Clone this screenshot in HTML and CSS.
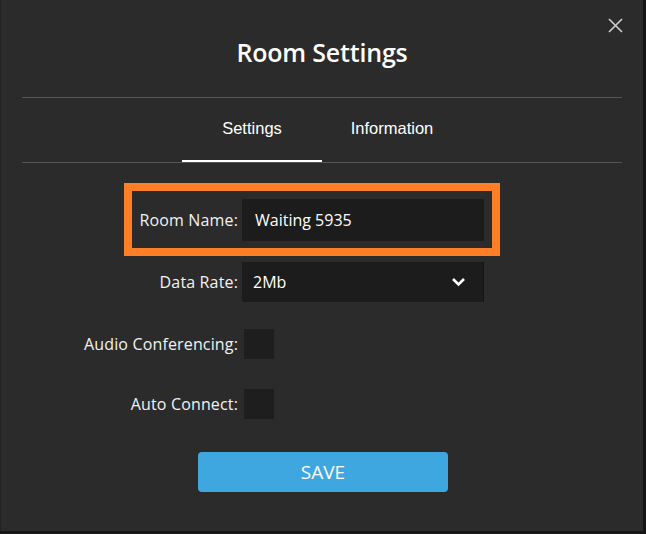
FILE: index.html
```html
<!DOCTYPE html>
<html lang="en">
<head>
    <meta charset="UTF-8">
    <meta name="viewport" content="width=device-width, initial-scale=1.0">
    <title>Room Settings</title>
    <link rel="stylesheet" href="styles.css">
</head>
<body>
    <div class="modal">
        <a href="#" class="modal-close">
            <svg width="15" height="15" viewBox="0 0 15 15"><path d="M1 1L14 14M14 1L1 14" stroke="#cfcfcf" stroke-width="1.6" fill="none"/></svg>
        </a>
        <div class="modal-header">
            <h1>Room Settings</h1>
        </div>
        <ul class="tabs">
            <li class="active">Settings</li>
            <li>Information</li>
        </ul>
        <div class="form">
            <div class="form-row highlight">
                <label>Room Name:</label>
                <input type="text" class="text-input" value="Waiting 5935">
            </div>
            <div class="form-row row-select">
                <label>Data Rate:</label>
                <div class="select">
                    <span>2Mb</span>
                    <svg width="15" height="10" viewBox="0 0 15 10"><path d="M2 2L7.5 7.5L13 2" stroke="#fff" stroke-width="2.6" fill="none"/></svg>
                </div>
            </div>
            <div class="form-row row-check">
                <label>Audio Conferencing:</label>
                <span class="checkbox"></span>
            </div>
            <div class="form-row row-check2">
                <label>Auto Connect:</label>
                <span class="checkbox"></span>
            </div>
            <button class="save-btn">SAVE</button>
        </div>
    </div>
</body>
</html>
```

FILE: styles.css
```css
*{
    margin: 0px;
    padding: 0px;
    box-sizing: border-box;
}
li{
    list-style: none;
}
body{
    background-color: #161616;
    font-family: "Open Sans", "Noto Sans", sans-serif;
    color: #fff;
}
.modal{
    position: relative;
    width: 643px;
    height: 531px;
    padding: 0 21px;
    background-color: #2b2b2b;
    border-left: 1px solid #232323;
}
.modal-close{
    position: absolute;
    top: 18px;
    right: 20px;
    width: 15px;
    height: 15px;
}
.modal-close svg{
    display: block;
}
.modal-header{
    height: 98px;
    padding-top: 34px;
    border-bottom: 1px solid #555;
    text-align: center;
}
.modal-header h1{
    font-size: 25px;
    line-height: 36px;
    font-weight: 600;
    letter-spacing: -0.2px;
}
.tabs{
    display: flex;
    justify-content: center;
    height: 65px;
    border-bottom: 1px solid #555;
    font-family: "Liberation Sans", Arial, sans-serif;
    font-size: 16.5px;
}
.tabs li{
    width: 140px;
    height: 64px;
    line-height: 60px;
    text-align: center;
}
.tabs .active{
    border-bottom: 2px solid #fff;
}
.form{
    display: flex;
    flex-direction: column;
    align-items: flex-start;
    padding-left: 58px;
    font-size: 16px;
}
.form-row{
    position: relative;
    display: flex;
    align-items: center;
    gap: 4px;
    width: 404px;
}
.form-row label{
    width: 158px;
    text-align: right;
    color: #f2f2f2;
    letter-spacing: 0.15px;
}
.highlight{
    height: 42px;
    margin-top: 36px;
}
.highlight::after{
    content: "";
    position: absolute;
    top: -16px;
    bottom: -15px;
    left: 44px;
    right: -16px;
    border: 8px solid #ff7f27;
    pointer-events: none;
}
.text-input{
    width: 242px;
    height: 42px;
    padding-left: 13px;
    border: none;
    outline: none;
    background-color: #1c1c1c;
    color: #fff;
    font-family: inherit;
    font-size: 16px;
}
.row-select{
    height: 40px;
    margin-top: 21px;
}
.select{
    display: flex;
    justify-content: space-between;
    align-items: center;
    width: 242px;
    height: 40px;
    padding: 0 17px 0 11px;
    background-color: #1c1c1c;
    border-right: 1px solid #151515;
}
.row-check{
    height: 40px;
    margin-top: 22px;
}
.row-check2{
    height: 40px;
    margin-top: 20px;
}
.checkbox{
    width: 30px;
    height: 30px;
    margin-left: 2px;
    background-color: #1e1e1e;
}
.save-btn{
    width: 250px;
    height: 40px;
    margin: 28px 0 0 118px;
    border: none;
    border-radius: 4px;
    background-color: #3fa7df;
    color: #fff;
    font-family: inherit;
    font-size: 19px;
}
```
